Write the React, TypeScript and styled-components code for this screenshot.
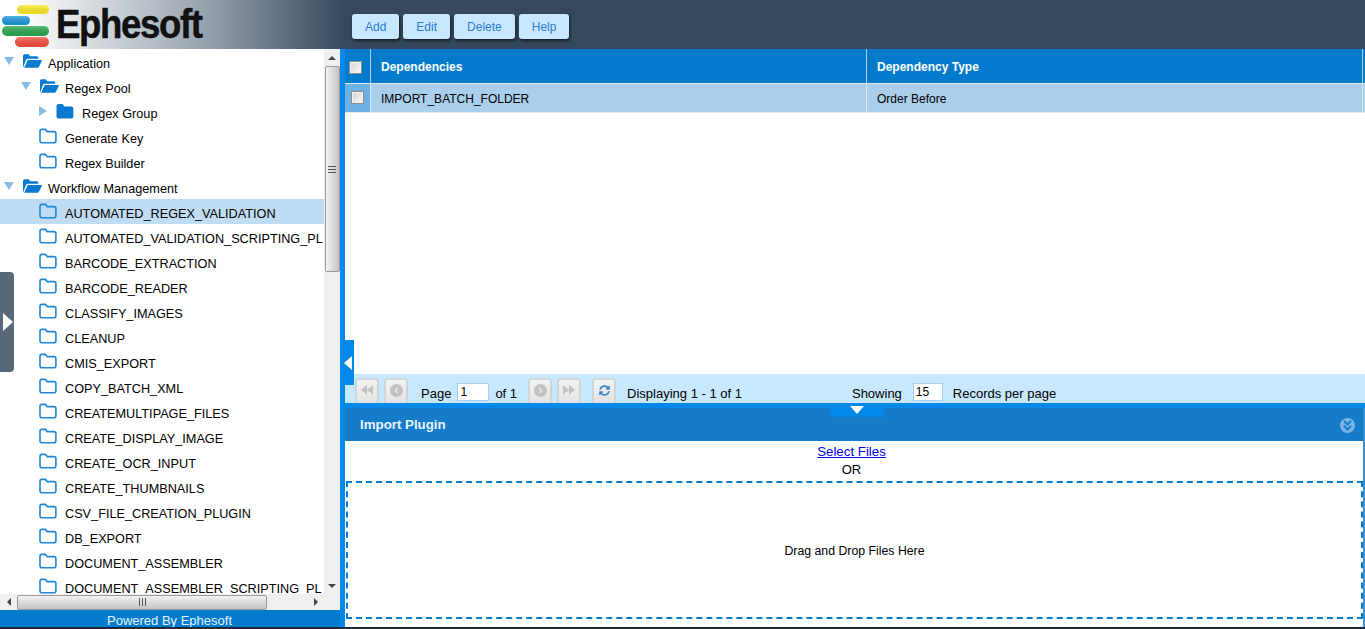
import React from 'react'
import styled, { createGlobalStyle } from 'styled-components'
import { FaSyncAlt, FaChevronLeft, FaChevronRight, FaAngleDoubleDown } from 'react-icons/fa'

const GlobalStyle = createGlobalStyle`
    html, body {
        margin: 0;
        padding: 0;
        height: 100%;
        overflow: hidden;
        background: #1d2a38;
        font-family: "Liberation Sans", Arial, sans-serif;
        font-size: 12px;
        color: #000;
    }
`

const Page = styled.div`
    position: relative;
    display: flex;
    flex-direction: column;
    width: 1365px;
    height: 627px;
    overflow: hidden;
`

const Header = styled.header`
    flex: 0 0 49px;
    display: flex;
    align-items: center;
    background: #35485d;
`

const LogoArea = styled.div`
    flex: 0 0 345px;
    height: 49px;
    display: flex;
    align-items: center;
    gap: 5px;
    padding-left: 2px;
    box-sizing: border-box;
    background: linear-gradient(to right, #fff 0, #fff 20px, #9aa5b1 200px, #35485d 345px);
`

const LogoText = styled.span`
    display: inline-block;
    font-size: 40px;
    font-weight: 700;
    letter-spacing: -1.5px;
    color: #111;
    line-height: 49px;
    -webkit-text-stroke: 0.5px #111;
    transform: scaleX(0.915);
    transform-origin: left center;
`

const Toolbar = styled.div`
    display: flex;
    gap: 4px;
    padding: 4px 0 0 7px;
`

const ToolButton = styled.button`
    height: 25px;
    padding: 0 13px;
    border: 0;
    border-radius: 3px;
    background: #c8e8ff;
    color: #2b7bd0;
    font: 12px "Liberation Sans", Arial, sans-serif;
    box-shadow: 1px 2px 3px rgba(0, 0, 0, 0.6);
`

const Body = styled.div`
    flex: 1;
    display: flex;
    min-height: 0;
`

const Sidebar = styled.aside`
    flex: 0 0 340px;
    display: flex;
    flex-direction: column;
    background: #fff;
    border-right: 5px solid #0288e8;
`

const TreeArea = styled.div`
    flex: 1;
    display: flex;
    min-height: 0;
`

const Tree = styled.ul`
    flex: 0 0 324px;
    list-style: none;
    margin: 0;
    padding: 0;
    overflow: hidden;
`

const TreeRow = styled.li<{ $depth: number; $selected?: boolean }>`
    height: 25px;
    box-sizing: border-box;
    display: flex;
    align-items: center;
    padding: 5px 0 0 ${({ $depth }) => 4 + $depth * 17}px;
    background: ${({ $selected }) => ($selected ? '#bfdcf2' : 'transparent')};
    font-size: 12.7px;
    white-space: nowrap;
    overflow: hidden;
`

const Arrow = styled.span<{ $open?: boolean }>`
    flex: 0 0 18px;
    display: flex;
    justify-content: ${({ $open }) => ($open ? 'flex-start' : 'center')};
    margin-top: -6px;
    &::before {
        content: '';
        border-style: solid;
        border-color: transparent;
        ${({ $open }) =>
            $open
                ? 'border-width: 8px 5.5px 0; border-top-color: #87bde6;'
                : 'border-width: 5.5px 0 5.5px 8px; border-left-color: #87bde6; margin-right: 8px;'}
    }
`

const ArrowSpacer = styled.span`
    flex: 0 0 18px;
`

const FolderSlot = styled.span`
    flex: 0 0 26px;
    display: flex;
    margin-top: -7px;
`

const ScrollTrack = styled.div<{ $horizontal?: boolean }>`
    display: flex;
    flex-direction: ${({ $horizontal }) => ($horizontal ? 'row' : 'column')};
    align-items: center;
    background: #f0f0f0;
    ${({ $horizontal }) => ($horizontal ? 'flex: 0 0 16px; padding-right: 16px;' : 'flex: 0 0 16px;')}
`

const ScrollButton = styled.span<{ $dir: 'up' | 'down' | 'left' | 'right' }>`
    flex: 0 0 17px;
    display: flex;
    align-items: center;
    justify-content: center;
    width: 16px;
    height: 16px;
    &::before {
        content: '';
        border-style: solid;
        border-color: transparent;
        ${({ $dir }) =>
            ({
                up: 'border-width: 0 4px 4px; border-bottom-color: #444;',
                down: 'border-width: 4px 4px 0; border-top-color: #444;',
                left: 'border-width: 4px 4px 4px 0; border-right-color: #444;',
                right: 'border-width: 4px 0 4px 4px; border-left-color: #444;',
            })[$dir]}
    }
`

const VerticalThumb = styled.div`
    flex: 0 0 206px;
    width: 15px;
    box-sizing: border-box;
    border: 1px solid #9a9a9a;
    border-radius: 2px;
    background: linear-gradient(to right, #f2f2f2, #dedede 45%, #c4c4c4);
    display: flex;
    align-items: center;
    justify-content: center;
    &::after {
        content: '';
        width: 8px;
        height: 7px;
        background: repeating-linear-gradient(to bottom, #555 0 1px, transparent 1px 3px);
    }
`

const ScrollSpace = styled.div`
    flex: 1;
`

const HorizontalThumb = styled.div`
    flex: 0 0 250px;
    height: 15px;
    box-sizing: border-box;
    border: 1px solid #9a9a9a;
    border-radius: 2px;
    background: linear-gradient(to bottom, #f2f2f2, #dedede 45%, #c4c4c4);
    display: flex;
    align-items: center;
    justify-content: center;
    &::after {
        content: '';
        width: 7px;
        height: 8px;
        background: repeating-linear-gradient(to right, #555 0 1px, transparent 1px 3px);
    }
`

const SideFooter = styled.div`
    flex: 0 0 17px;
    height: 17px;
    overflow: hidden;
    line-height: 21px;
    padding-right: 1px;
    text-align: center;
    background: #027bcc;
    color: #e4f2fc;
    font-size: 13px;
`

const Main = styled.main`
    flex: 1;
    min-width: 0;
    display: flex;
    flex-direction: column;
    background: #fff;
`

const GridArea = styled.section`
    flex: 1;
    min-height: 0;
`

const GridRow = styled.div<{ $head?: boolean }>`
    display: grid;
    grid-template-columns: 25px 496px 496px 1fr;
    box-sizing: border-box;
    height: ${({ $head }) => ($head ? '34px' : '30px')};
    padding-top: ${({ $head }) => ($head ? '2px' : '0')};
    background: ${({ $head }) => ($head ? '#027bcc' : '#aacfec')};
    color: ${({ $head }) => ($head ? '#fff' : '#000')};
    font-weight: ${({ $head }) => ($head ? 700 : 400)};
    border-top: ${({ $head }) => ($head ? '0' : '1px solid #dfeaf3')};
    border-bottom: ${({ $head }) => ($head ? '0' : '1px solid #e8e8e8')};
`

const GridCell = styled.div<{ $head?: boolean }>`
    display: flex;
    align-items: center;
    padding: 1px 0 0 10px;
    margin-top: ${({ $head }) => ($head ? '-2px' : '0')};
    border-left: 1px solid ${({ $head }) => ($head ? '#b8c8d4' : '#dbe9f4')};
`

const CheckCell = styled.div<{ $head?: boolean }>`
    display: flex;
    align-items: center;
    justify-content: center;
    background: ${({ $head }) => ($head ? '#027bcc' : '#6db0e3')};
`

const CheckBox = styled.span<{ $head?: boolean }>`
    width: 13px;
    height: 13px;
    box-sizing: border-box;
    border: 1px solid #8d8d8d;
    box-shadow: inset 0 0 0 1px #f2f2f2;
    background: linear-gradient(135deg, #d2d2d2, #fbfbfb);
    margin: ${({ $head }) => ($head ? '1px 4px 0 0' : '-2px 0 0 0')};
`

const Pager = styled.div`
    flex: 0 0 29px;
    display: flex;
    align-items: flex-start;
    background: #c8e8ff;
    overflow: hidden;
    padding-left: 10px;
    box-sizing: border-box;
    font-size: 13px;
`

const PagerButton = styled.span<{ $active?: boolean; $left?: number }>`
    flex: none;
    width: 24px;
    height: 28px;
    margin: 4px 5px 0 ${({ $left }) => $left ?? 0}px;
    box-sizing: border-box;
    border: 2px solid #d2d5d8;
    border-radius: 4px;
    padding-bottom: 4px;
    background: linear-gradient(to bottom, #f3f3f3, #e2e2e2);
    display: flex;
    align-items: center;
    justify-content: center;
    color: ${({ $active }) => ($active ? '#3d7fc0' : '#c2c2c2')};
    font-size: 11px;
`

const RoundGlyph = styled.span`
    width: 13px;
    height: 13px;
    border-radius: 50%;
    background: #c2c2c2;
    color: #eee;
    display: flex;
    align-items: center;
    justify-content: center;
    font-size: 7px;
`

const DoubleGlyph = styled.span<{ $left?: boolean }>`
    display: flex;
    transform: ${({ $left }) => ($left ? 'scaleX(-1)' : 'none')};
    &::before,
    &::after {
        content: '';
        border-style: solid;
        border-color: transparent;
        border-width: 5px 0 5px 6px;
        border-left-color: #c2c2c2;
    }
`

const PagerText = styled.span<{ $left?: number; $right?: number }>`
    flex: none;
    line-height: 14px;
    margin: 13px ${({ $right }) => $right ?? 0}px 0 ${({ $left }) => $left ?? 0}px;
`

const PagerInput = styled.input<{ $width: number }>`
    flex: none;
    width: ${({ $width }) => $width}px;
    height: 18px;
    margin-top: 9px;
    padding: 0 0 0 2px;
    box-sizing: border-box;
    border: 1px solid #a9cde8;
    background: #fff;
    font: 12px "Liberation Sans", Arial, sans-serif;
    outline: 0;
`

const Strip = styled.div`
    flex: 0 0 5px;
    background: #0288e8;
`

const ImportPanel = styled.section`
    flex: 0 0 219px;
    display: flex;
    flex-direction: column;
    border-right: 2px solid #3a8fd6;
`

const PanelHead = styled.div`
    flex: 0 0 33px;
    display: flex;
    align-items: center;
    justify-content: space-between;
    padding: 0 8px 0 15px;
    background: #167cca;
    color: #e8f4fc;
    font-size: 13.3px;
    font-weight: 700;
`

const CollapseIcon = styled.span`
    width: 15px;
    height: 15px;
    margin-top: 2px;
    border-radius: 50%;
    background: #7db6e4;
    color: #167cca;
    display: flex;
    align-items: center;
    justify-content: center;
    font-size: 13px;
`

const PanelBody = styled.div`
    flex: 1;
    display: flex;
    flex-direction: column;
    align-items: center;
    box-sizing: border-box;
    padding: 1px 0 8px 1px;
    font-size: 12.3px;
`

const SelectLink = styled.a`
    height: 18px;
    line-height: 19px;
    color: #0000ee;
    font-size: 13.3px;
    text-decoration: underline;
    padding-right: 6px;
`

const OrText = styled.div`
    height: 18px;
    line-height: 19px;
    font-size: 13px;
    padding-right: 6px;
`

const DropZone = styled.div`
    flex: 1;
    align-self: stretch;
    display: flex;
    align-items: center;
    justify-content: center;
    margin-top: 3px;
    padding-top: 2px;
    border: 2px dashed #027bcc;
`

const SideToggle = styled.div`
    position: absolute;
    left: 0;
    top: 272px;
    width: 14px;
    height: 100px;
    padding-left: 3px;
    box-sizing: border-box;
    display: flex;
    align-items: center;
    background: #5a6978;
    border-radius: 0 4px 4px 0;
    &::before {
        content: '';
        border-style: solid;
        border-color: transparent;
        border-width: 9px 0 9px 10px;
        border-left-color: #fff;
    }
`

const GridToggle = styled.div`
    position: absolute;
    left: 340px;
    top: 340px;
    width: 14px;
    height: 45px;
    padding-left: 4px;
    box-sizing: border-box;
    display: flex;
    align-items: center;
    background: #0288e8;
    &::before {
        content: '';
        border-style: solid;
        border-color: transparent;
        border-width: 7px 8px 7px 0;
        border-right-color: #fff;
    }
`

const PanelToggle = styled.div`
    position: absolute;
    left: 830px;
    top: 403px;
    width: 54px;
    height: 14px;
    display: flex;
    align-items: center;
    justify-content: center;
    background: #0288e8;
    &::before {
        content: '';
        border-style: solid;
        border-color: transparent;
        border-width: 8px 7.5px 0;
        border-top-color: #fff;
    }
`

const Logo = () => (
    <svg width="49" height="44" viewBox="0 0 49 44">
        <defs>
            <linearGradient id="barShade" x1="0" y1="0" x2="0" y2="1">
                <stop offset="0" stopColor="#fff" stopOpacity="0.25" />
                <stop offset="1" stopColor="#000" stopOpacity="0.06" />
            </linearGradient>
        </defs>
        <rect x="15" y="2" width="32" height="9" rx="4.5" fill="#fdec24" />
        <rect x="0" y="13" width="28" height="9" rx="4.5" fill="#1d98dd" />
        <rect x="0" y="23" width="47" height="10" rx="5" fill="#2aa84f" />
        <rect x="13" y="34" width="34" height="10" rx="5" fill="#f34e3f" />
        <rect x="15" y="2" width="32" height="9" rx="4.5" fill="url(#barShade)" />
        <rect x="0" y="13" width="28" height="9" rx="4.5" fill="url(#barShade)" />
        <rect x="0" y="23" width="47" height="10" rx="5" fill="url(#barShade)" />
        <rect x="13" y="34" width="34" height="10" rx="5" fill="url(#barShade)" />
    </svg>
)

const FolderOutline = () => (
    <svg width="18" height="16" viewBox="0 0 18 16">
        <path
            d="M1 3.2A1.8 1.8 0 0 1 2.8 1.4h3.6l1.9 2.2h6.6a2 2 0 0 1 2 2v7.1a2 2 0 0 1-2 2H3a2 2 0 0 1-2-2z"
            fill="none"
            stroke="#1f86d8"
            strokeWidth="1.6"
        />
    </svg>
)

const FolderClosed = () => (
    <svg width="18" height="16" viewBox="0 0 18 16">
        <path
            d="M.5 3A2 2 0 0 1 2.5 1h4l2 2.4h6.8a2 2 0 0 1 2 2v8a2 2 0 0 1-2 2h-12.800a2 2 0 0 1-2-2z"
            fill="#0a7ad0"
        />
    </svg>
)

const FolderOpened = () => (
    <svg width="20" height="16" viewBox="0 0 20 16">
        <path
            d="M1 14V2.800A1.500 1.500 0 0 1 2.500 1.300h4l1.800 2h6.500a1.500 1.500 0 0 1 1.500 1.500v1H5.800a2 2 0 0 0-1.800 1.100L1.300 14z"
            fill="#0a7ad0"
        />
        <path d="M5.700 7.100H19.500a.5.5 0 0 1 .4.700L16.800 14a1.500 1.500 0 0 1-1.300.8H2.200z" fill="#0a7ad0" />
    </svg>
)

const plugins = [
    'AUTOMATED_REGEX_VALIDATION',
    'AUTOMATED_VALIDATION_SCRIPTING_PL',
    'BARCODE_EXTRACTION',
    'BARCODE_READER',
    'CLASSIFY_IMAGES',
    'CLEANUP',
    'CMIS_EXPORT',
    'COPY_BATCH_XML',
    'CREATEMULTIPAGE_FILES',
    'CREATE_DISPLAY_IMAGE',
    'CREATE_OCR_INPUT',
    'CREATE_THUMBNAILS',
    'CSV_FILE_CREATION_PLUGIN',
    'DB_EXPORT',
    'DOCUMENT_ASSEMBLER',
    'DOCUMENT_ASSEMBLER_SCRIPTING_PL',
]

const TreeNode: React.FC<{ depth: number; label: string; state: 'open' | 'closed' | 'leaf'; selected?: boolean }> = ({
    depth,
    label,
    state,
    selected,
}) => (
    <TreeRow $depth={depth} $selected={selected}>
        {state === 'leaf' ? <ArrowSpacer /> : <Arrow $open={state === 'open'} />}
        <FolderSlot>
            {state === 'open' && <FolderOpened />}
            {state === 'closed' && <FolderClosed />}
            {state === 'leaf' && <FolderOutline />}
        </FolderSlot>
        {label}
    </TreeRow>
)

export default function App() {
    return (
        <Page>
            <GlobalStyle />
            <Header>
                <LogoArea>
                    <Logo />
                    <LogoText>Ephesoft</LogoText>
                </LogoArea>
                <Toolbar>
                    <ToolButton>Add</ToolButton>
                    <ToolButton>Edit</ToolButton>
                    <ToolButton>Delete</ToolButton>
                    <ToolButton>Help</ToolButton>
                </Toolbar>
            </Header>
            <Body>
                <Sidebar>
                    <TreeArea>
                        <Tree>
                            <TreeNode depth={0} label="Application" state="open" />
                            <TreeNode depth={1} label="Regex Pool" state="open" />
                            <TreeNode depth={2} label="Regex Group" state="closed" />
                            <TreeNode depth={1} label="Generate Key" state="leaf" />
                            <TreeNode depth={1} label="Regex Builder" state="leaf" />
                            <TreeNode depth={0} label="Workflow Management" state="open" />
                            {plugins.map((name, i) => (
                                <TreeNode key={name} depth={1} label={name} state="leaf" selected={i === 0} />
                            ))}
                        </Tree>
                        <ScrollTrack>
                            <ScrollButton $dir="up" />
                            <VerticalThumb />
                            <ScrollSpace />
                            <ScrollButton $dir="down" />
                        </ScrollTrack>
                    </TreeArea>
                    <ScrollTrack $horizontal>
                        <ScrollButton $dir="left" />
                        <HorizontalThumb />
                        <ScrollSpace />
                        <ScrollButton $dir="right" />
                    </ScrollTrack>
                    <SideFooter>Powered By Ephesoft</SideFooter>
                </Sidebar>
                <Main>
                    <GridArea>
                        <GridRow $head>
                            <CheckCell $head>
                                <CheckBox $head />
                            </CheckCell>
                            <GridCell $head>Dependencies</GridCell>
                            <GridCell $head>Dependency Type</GridCell>
                            <GridCell $head />
                        </GridRow>
                        <GridRow>
                            <CheckCell>
                                <CheckBox />
                            </CheckCell>
                            <GridCell>IMPORT_BATCH_FOLDER</GridCell>
                            <GridCell>Order Before</GridCell>
                            <GridCell />
                        </GridRow>
                    </GridArea>
                    <Pager>
                        <PagerButton>
                            <DoubleGlyph $left />
                        </PagerButton>
                        <PagerButton>
                            <RoundGlyph>
                                <FaChevronLeft />
                            </RoundGlyph>
                        </PagerButton>
                        <PagerText $left={8} $right={6}>
                            Page
                        </PagerText>
                        <PagerInput $width={32} defaultValue="1" />
                        <PagerText $left={6} $right={11}>
                            of 1
                        </PagerText>
                        <PagerButton>
                            <RoundGlyph>
                                <FaChevronRight />
                            </RoundGlyph>
                        </PagerButton>
                        <PagerButton>
                            <DoubleGlyph />
                        </PagerButton>
                        <PagerButton $active $left={6}>
                            <FaSyncAlt />
                        </PagerButton>
                        <PagerText $left={6} $right={110}>
                            Displaying 1 - 1 of 1
                        </PagerText>
                        <PagerText $right={11}>Showing</PagerText>
                        <PagerInput $width={30} defaultValue="15" />
                        <PagerText $left={10}>Records per page</PagerText>
                    </Pager>
                    <Strip />
                    <ImportPanel>
                        <PanelHead>
                            Import Plugin
                            <CollapseIcon>
                                <FaAngleDoubleDown />
                            </CollapseIcon>
                        </PanelHead>
                        <PanelBody>
                            <SelectLink href="#">Select Files</SelectLink>
                            <OrText>OR</OrText>
                            <DropZone>Drag and Drop Files Here</DropZone>
                        </PanelBody>
                    </ImportPanel>
                </Main>
            </Body>
            <SideToggle />
            <GridToggle />
            <PanelToggle />
        </Page>
    )
}
